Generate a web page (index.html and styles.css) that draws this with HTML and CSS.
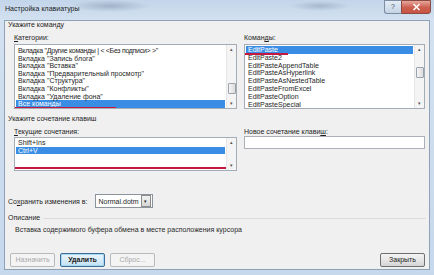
FILE: index.html
```html
<!DOCTYPE html>
<html lang="ru">
<head>
    <meta charset="UTF-8">
    <title>Настройка клавиатуры</title>
    <link rel="stylesheet" href="styles.css">
</head>
<body>
<div class="window">
    <div class="titlebar">
        <span class="title">Настройка клавиатуры</span>
        <div class="caption">
            <span class="cap-help">?</span>
            <span class="cap-close">
                <svg width="9" height="8" viewBox="0 0 9 8"><path d="M1.5 1 L7.5 7 M7.5 1 L1.5 7" stroke="#fff" stroke-width="1.6"/></svg>
            </span>
        </div>
    </div>

    <div class="dialog">
        <div class="group-head">Укажите команду</div>
        <div class="cols">
            <div>
                <div class="label"><u>К</u>атегории:</div>
                <div class="listbox tall">
                    <div class="rows shift">
                        <div class="row narrow">Вкладка "Другие команды | &lt; &lt;Без подписи&gt; &gt;"</div>
                        <div class="row">Вкладка "Запись блога"</div>
                        <div class="row">Вкладка "Вставка"</div>
                        <div class="row">Вкладка "Предварительный просмотр"</div>
                        <div class="row">Вкладка "Структура"</div>
                        <div class="row">Вкладка "Конфликты"</div>
                        <div class="row">Вкладка "Удаление фона"</div>
                        <div class="row selected">Все команды</div>
                    </div>
                    <div class="scrollbar">
                        <span class="arrow">&#9652;</span>
                        <span class="thumb thumb-low"></span>
                        <span class="arrow">&#9662;</span>
                    </div>
                    <span class="mark mark-cat"></span>
                </div>
            </div>
            <div>
                <div class="label">Коман<u>д</u>ы:</div>
                <div class="listbox tall">
                    <div class="rows">
                        <div class="row cmd selected">EditPaste</div>
                        <div class="row cmd">EditPaste2</div>
                        <div class="row cmd">EditPasteAppendTable</div>
                        <div class="row cmd">EditPasteAsHyperlink</div>
                        <div class="row cmd">EditPasteAsNestedTable</div>
                        <div class="row cmd">EditPasteFromExcel</div>
                        <div class="row cmd">EditPasteOption</div>
                        <div class="row cmd">EditPasteSpecial</div>
                    </div>
                    <div class="scrollbar">
                        <span class="arrow">&#9652;</span>
                        <span class="thumb thumb-high"></span>
                        <span class="arrow">&#9662;</span>
                    </div>
                    <span class="mark mark-cmd"></span>
                </div>
            </div>
        </div>

        <div class="group-head second">Укажите сочетание клавиш</div>
        <div class="cols">
            <div>
                <div class="label"><u>Т</u>екущие сочетания:</div>
                <div class="listbox short">
                    <div class="rows">
                        <div class="row">Shift+Ins</div>
                        <div class="row selected">Ctrl+V</div>
                    </div>
                    <div class="scrollbar">
                        <span class="arrow">&#9652;</span>
                        <span class="arrow">&#9662;</span>
                    </div>
                    <span class="mark mark-keys"></span>
                </div>
            </div>
            <div>
                <div class="label">Новое сочетание клави<u>ш</u>:</div>
                <div class="input"></div>
            </div>
        </div>

        <div class="save-row">
            <span>Со<u>х</u>ранить изменения в:</span>
            <div class="combo">
                <span class="combo-text">Normal.dotm</span>
                <span class="combo-btn">&#9662;</span>
            </div>
        </div>

        <div class="group-head line">Описание</div>
        <div class="desc">Вставка содержимого буфера обмена в месте расположения курсора</div>

        <div class="buttons">
            <span class="btn disabled">Назначить</span>
            <span class="btn focused">Удалить</span>
            <span class="btn disabled">Сброс...</span>
            <span class="spacer"></span>
            <span class="btn">Закрыть</span>
        </div>
    </div>
</div>
</body>
</html>
```

FILE: styles.css
```css
body {
    margin: 0;
    font-family: "Liberation Sans", Arial, sans-serif;
    font-size: 7px;
    color: #1e1e1e;
    background: #aac2dc;
}
u {
    text-decoration: underline;
    text-underline-offset: 1px;
}
.window {
    width: 434px;
    height: 275px;
    box-sizing: border-box;
    padding: 0 4px 5px 4px;
    background:
        radial-gradient(ellipse 40px 6px at 110px 6px, rgba(90, 110, 135, 0.35), transparent),
        radial-gradient(ellipse 30px 5px at 320px 6px, rgba(90, 110, 135, 0.3), transparent),
        linear-gradient(#c3d5ea, #d3e1f0 20px, #c6d8ec);
}
.titlebar {
    height: 20px;
    display: flex;
    align-items: flex-start;
    justify-content: space-between;
    margin: 0 -4px;
    padding-left: 5px;
}
.title {
    font-size: 7px;
    line-height: 18px;
    color: #1b1b1b;
}
.caption {
    display: flex;
    margin-right: 3px;
}
.cap-help {
    width: 17px;
    height: 14px;
    box-sizing: border-box;
    border: 1px solid #7a8da3;
    border-right: none;
    border-radius: 0 0 0 3px;
    background: linear-gradient(#e4ecf5, #c4d3e4);
    text-align: center;
    line-height: 12px;
    font-size: 7px;
    color: #3c4c60;
}
.cap-close {
    width: 30px;
    height: 14px;
    box-sizing: border-box;
    border: 1px solid #8a4a44;
    border-radius: 0 0 3px 0;
    background: linear-gradient(#e6a89c, #cc5e4e 55%, #c75546);
    display: flex;
    align-items: center;
    justify-content: center;
}
.dialog {
    height: 250px;
    box-sizing: border-box;
    background: #f0f0f0;
    border: 1px solid #8ea1b8;
    padding: 0 3px 0 3px;
}
.group-head {
    line-height: 8px;
    color: #1e1e1e;
}
.group-head.second {
    margin-top: 6px;
}
.group-head.line {
    display: flex;
    align-items: center;
    gap: 3px;
    margin-top: 6px;
}
.group-head.line::after {
    content: "";
    flex: 1;
    border-top: 1px solid #dcdcdc;
}
.cols {
    display: grid;
    grid-template-columns: 223px 181px;
    column-gap: 7px;
    margin-left: 6px;
}
.label {
    line-height: 8px;
    margin-top: 5px;
}
.listbox {
    position: relative;
    display: flex;
    background: #fff;
    border: 1px solid #a5acb5;
    box-sizing: border-box;
    overflow: hidden;
}
.listbox.tall {
    height: 65px;
    margin-top: 2px;
}
.listbox.short {
    height: 34px;
    margin-top: 1px;
}
.rows {
    flex: 1;
    padding: 1px 1px 0 1px;
}
.rows.shift {
    padding-top: 2px;
}
.row {
    line-height: 7.6px;
    height: 7.6px;
    padding-left: 2px;
    white-space: nowrap;
}
.row.cmd {
    line-height: 7.8px;
    height: 7.8px;
}
.row.narrow {
    letter-spacing: -0.3px;
}
.row.selected {
    background: #3a8de4;
    color: #fff;
}
.scrollbar {
    width: 9px;
    display: flex;
    flex-direction: column;
    align-items: center;
    justify-content: space-between;
    background: #f4f4f4;
    border-left: 1px solid #e6e6e6;
    position: relative;
}
.arrow {
    font-size: 5px;
    line-height: 9px;
    color: #555;
}
.thumb {
    position: absolute;
    left: 1px;
    width: 6px;
    height: 9px;
    border: 1px solid #9aa3ad;
    border-radius: 1px;
    background: linear-gradient(90deg, #f6f6f6, #dcdcdc);
}
.thumb-low {
    top: 38px;
}
.thumb-high {
    top: 22px;
}
.mark {
    position: absolute;
    height: 2px;
    background: #c41840;
}
.mark-cat {
    left: 0;
    bottom: -1px;
    width: 101px;
}
.mark-cmd {
    left: -2px;
    top: 8px;
    width: 45px;
}
.mark-keys {
    left: 0;
    bottom: 1px;
    width: 211px;
}
.input {
    height: 13px;
    background: #fff;
    border: 1px solid #abb0b7;
    box-sizing: border-box;
}
.save-row {
    display: flex;
    align-items: center;
    gap: 7px;
    margin-top: 23px;
}
.combo {
    width: 58px;
    height: 14px;
    box-sizing: border-box;
    display: flex;
    align-items: center;
    background: #fff;
    border: 1px solid #8d939b;
}
.combo-text {
    flex: 1;
    padding-left: 3px;
}
.combo-btn {
    width: 8px;
    height: 10px;
    margin-right: 1px;
    border: 1px solid #8c8c8c;
    background: linear-gradient(#f2f2f2, #d6d6d6);
    font-size: 5px;
    line-height: 10px;
    text-align: center;
    color: #222;
}
.desc {
    line-height: 8px;
    margin-top: 4px;
    padding-left: 7px;
    color: #2a2a2a;
}
.buttons {
    display: flex;
    gap: 5px;
    margin-top: 19px;
    padding: 0 1px 0 2px;
}
.spacer {
    flex: 1;
}
.btn {
    width: 45px;
    height: 14px;
    box-sizing: border-box;
    border: 1px solid #707070;
    border-radius: 2px;
    background: linear-gradient(#f3f3f3, #e6e6e6 50%, #d4d4d4);
    text-align: center;
    line-height: 12px;
    color: #1a1a1a;
}
.btn.disabled {
    border-color: #b6babd;
    background: #f4f4f4;
    color: #a8a8a8;
}
.btn.focused {
    border-color: #3a6e98;
    box-shadow: inset 0 0 0 1px #a6d8f4;
    background: linear-gradient(#eaf5fb, #d8ecf8 50%, #c2e0f3);
    font-weight: bold;
}
```
